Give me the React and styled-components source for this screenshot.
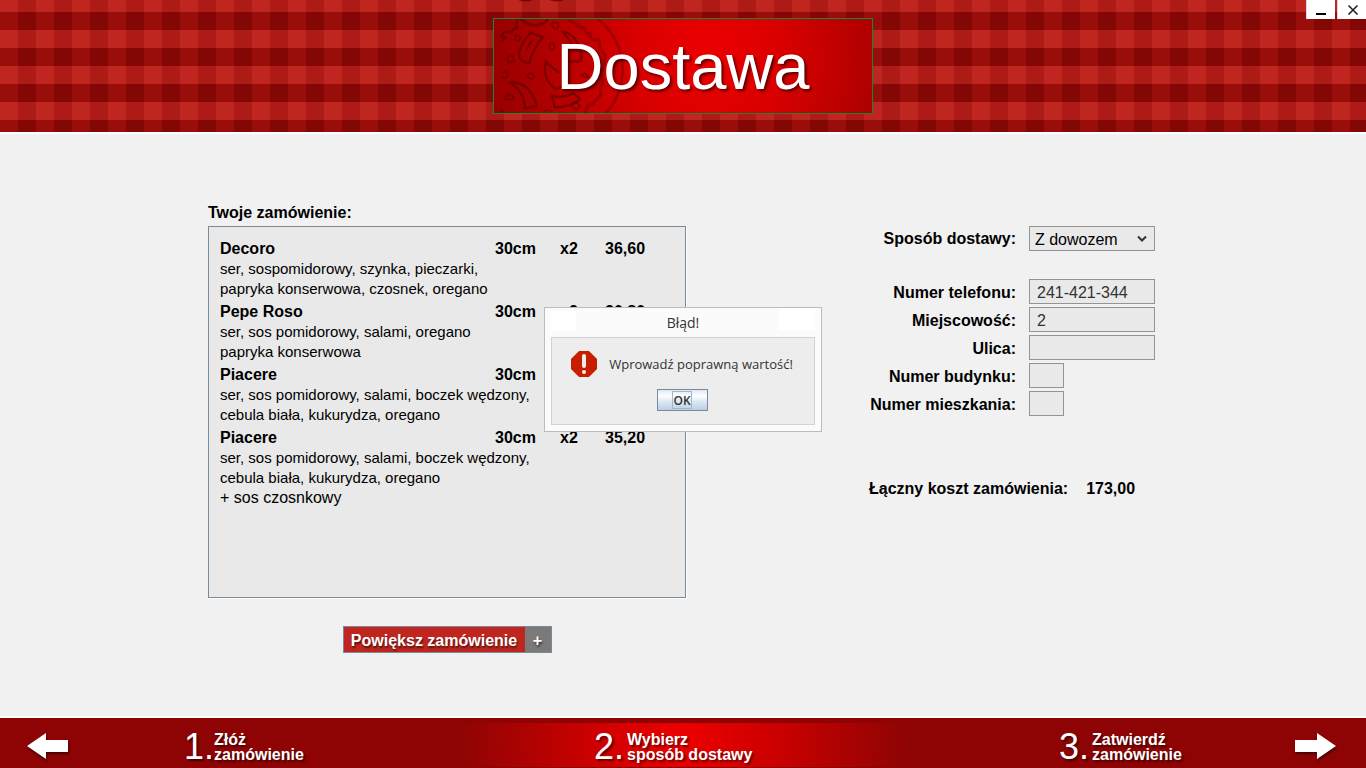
import React from "react";
import styled, { createGlobalStyle } from "styled-components";

const GlobalStyle = createGlobalStyle`
  *, *::before, *::after { box-sizing: border-box; }
  body {
    margin: 0;
    background: #f1f1f1;
    color: #000;
    font-family: "Liberation Sans", Arial, sans-serif;
    font-size: 16px;
  }
  button, input, select { font: inherit; color: inherit; margin: 0; }
`;

const Page = styled.div`
  display: flex;
  flex-direction: column;
  min-height: 100vh;
  position: relative;
`;

const Header = styled.header`
  position: relative;
  display: flex;
  justify-content: center;
  padding: 18px 0;
  background: conic-gradient(#ae1a16 0 25%, #830805 0 50%, #990d0a 0 75%, #c02620 0) 0 -6px / 36px 36px;
`;

const TitlePlate = styled.div`
  position: relative;
  display: flex;
  align-items: center;
  justify-content: center;
  width: 380px;
  height: 96px;
  border: 1px solid #0f8a3c;
  background: radial-gradient(circle 220px at 57% 42%, #ee0000 0%, #d80000 35%, #b20000 72%, #980000 100%);
`;

const Title = styled.h1`
  position: relative;
  margin: 0;
  color: #fff;
  font-size: 65px;
  font-weight: 400;
  line-height: 94px;
  padding-top: 2px;
  text-shadow: 2px 2px 3px rgba(0, 0, 0, 0.6);
`;

const PizzaArt = styled.svg`
  position: absolute;
  top: 0;
  left: 0;
  width: 146px;
  height: 94px;
`;

const PizzaEdge = styled.svg`
  position: absolute;
  top: -19px;
  left: 22px;
  width: 50px;
  height: 3px;
`;

const WindowControls = styled.div`
  position: absolute;
  top: 0;
  right: 0;
  display: flex;
  gap: 2px;
`;

const WindowButton = styled.button`
  display: block;
  width: 29px;
  height: 19px;
  padding: 0;
  border: 0;
  border-left: 1px solid #d4d8ea;
  background: #fff;

  svg { display: block; }
`;

const Main = styled.main`
  flex: 1;
  display: flex;
  justify-content: center;
  align-items: flex-start;
  gap: 182px;
  padding: 68px 24px 63px;
  border-top: 2px solid #fff;
  border-bottom: 2px solid #fff;
`;

const OrderSection = styled.section`
  display: flex;
  flex-direction: column;
  width: 478px;
`;

const SectionTitle = styled.h2`
  margin: 0 0 2px;
  font-size: 16px;
  line-height: 22px;
`;

const OrderList = styled.div`
  min-height: 372px;
  padding: 10px 11px;
  border: 1px solid #7a8a99;
  box-shadow: 1px 1px 0 #fff;
  background: #e9e9e9;
`;

const OrderTable = styled.table`
  width: 100%;
  table-layout: fixed;
  border-collapse: collapse;
  text-align: left;
`;

const NameColumn = styled.col`
  width: 275px;
`;

const SizeColumn = styled.col`
  width: 65px;
`;

const CountColumn = styled.col`
  width: 45px;
`;

const Cell = styled.th`
  padding: 2px 0 0;
  font-weight: 700;
  line-height: 20px;
`;

const Ingredients = styled.td`
  padding: 0 0 1px;
  font-size: 15px;
  line-height: 20px;
`;

const Line = styled.div`
  font-size: ${(p) => (p.$extra ? "16px" : "inherit")};
`;

const EnlargeButton = styled.button`
  display: flex;
  align-self: center;
  height: 27px;
  margin-top: 28px;
  padding: 0;
  border: 1px solid #7a8a99;
  background: #c02620;
  color: #fff;
  font-weight: 700;
  line-height: 24px;
  text-shadow: 1px 2px 2px rgba(0, 0, 0, 0.55);
`;

const EnlargeText = styled.span`
  width: 181px;
  height: 25px;
  padding-top: 2px;
  text-align: center;
`;

const Plus = styled.span`
  width: 26px;
  height: 25px;
  padding-top: 2px;
  background: #7a7a7a;
  text-align: center;
`;

const DeliveryForm = styled.form`
  display: flex;
  flex-direction: column;
  gap: 3px;
  width: 290px;
  padding: 24px 3px 0 0;
`;

const FieldRow = styled.div`
  display: grid;
  grid-template-columns: 1fr 126px;
  column-gap: 13px;
  align-items: center;
  margin-bottom: ${(p) => (p.$spaced ? "25px" : "0")};
`;

const Label = styled.label`
  padding-top: ${(p) => (p.$raised ? "0" : "2px")};
  font-weight: 700;
  line-height: 20px;
  text-align: right;
  white-space: nowrap;
`;

const TextInput = styled.input`
  width: ${(p) => (p.$short ? "35px" : "100%")};
  height: 25px;
  padding: 2px 7px 0;
  border: 1px solid #949494;
  border-radius: 0;
  background: #e9e9e9;
  color: #333;
  outline: none;
`;

const SelectWrap = styled.div`
  position: relative;

  svg {
    position: absolute;
    right: 7px;
    top: 9px;
    pointer-events: none;
  }
`;

const Select = styled.select`
  display: block;
  appearance: none;
  width: 100%;
  height: 25px;
  padding: 2px 5px 0;
  border: 1px solid #949494;
  border-radius: 0;
  background: #e9e9e9;
`;

const Total = styled.p`
  display: flex;
  gap: 18px;
  margin: 60px 0 0 1px;
  font-weight: 700;
  line-height: 20px;
  white-space: nowrap;
`;

const Footer = styled.footer`
  display: grid;
  grid-template-columns: 184fr 410fr 465fr 236fr 71fr;
  align-items: center;
  height: 50px;
  padding-top: 8px;
  background:
    radial-gradient(ellipse 225px 200px at 50% 30%, #ee0000 0%, #c80000 45%, #8e0404 100%)
    center 5px / 448px 44px no-repeat,
    #8e0404;
  color: #fff;
`;

const ArrowButton = styled.button`
  display: block;
  width: 46px;
  height: 34px;
  margin-left: ${(p) => (p.$back ? "26px" : "0")};
  padding: 0;
  border: 0;
  background: none;

  svg {
    display: block;
    filter: drop-shadow(1px 2px 1px rgba(0, 0, 0, 0.5));
  }
`;

const Step = styled.div`
  display: flex;
  align-items: center;
  gap: ${(p) => (p.$tight ? "0" : "3px")};
  white-space: nowrap;
  text-shadow: 2px 2px 2px rgba(0, 0, 0, 0.5);
`;

const StepNumber = styled.span`
  font-size: 36px;
  line-height: 40px;
`;

const StepLabel = styled.span`
  font-weight: 700;
  line-height: 15px;
`;

const Dialog = styled.div`
  position: absolute;
  top: 307px;
  left: 50%;
  width: 278px;
  padding: 0 6px 6px;
  border: 1px solid #bcbcbc;
  background: #fbfbfb;
  color: #333;
  font-family: "Open Sans", "Noto Sans", sans-serif;
  transform: translateX(-50%);
`;

const DialogTitle = styled.h2`
  margin: 0;
  font-size: 14px;
  font-weight: 400;
  line-height: 29px;
  text-align: center;
  background:
    linear-gradient(#fff, #fff) left 3px / 25px 20px no-repeat,
    linear-gradient(#fff, #fff) right top / 36px 22px no-repeat;
`;

const DialogBody = styled.div`
  display: flex;
  flex-direction: column;
  align-items: center;
  gap: 12px;
  padding: 13px 2px 13px 0;
  border: 1px solid #d2d2d2;
  background: #ededed;
`;

const Message = styled.p`
  display: flex;
  align-items: center;
  gap: 12px;
  margin: 0;
  font-size: 13px;
  font-weight: 500;
  line-height: 26px;
  white-space: nowrap;
`;

const OkButton = styled.button`
  display: flex;
  align-items: center;
  justify-content: center;
  width: 51px;
  height: 22px;
  padding: 0;
  border: 1px solid #7a8a99;
  background: linear-gradient(#dde8f3 0%, #ffffff 30%, #e4edf6 50%, #b8cfe5 100%);
  font-size: 12px;
  font-weight: 600;
`;

const FocusBox = styled.span`
  height: 18px;
  border: 1px solid #a3b8cc;
  line-height: 17px;
`;

const orders = [
  { name: "Decoro", size: "30cm", count: "x2", price: "36,60", lines: ["ser, sospomidorowy, szynka, pieczarki,", "papryka konserwowa, czosnek, oregano"] },
  { name: "Pepe Roso", size: "30cm", count: "x2", price: "30,80", lines: ["ser, sos pomidorowy, salami, oregano", "papryka konserwowa"] },
  { name: "Piacere", size: "30cm", count: "", price: "", lines: ["ser, sos pomidorowy, salami, boczek wędzony,", "cebula biała, kukurydza, oregano"] },
  { name: "Piacere", size: "30cm", count: "x2", price: "35,20", lines: ["ser, sos pomidorowy, salami, boczek wędzony,", "cebula biała, kukurydza, oregano"], extra: "+ sos czosnkowy" },
];

const steps = [
  ["1.", "Złóż", "zamówienie"],
  ["2.", "Wybierz", "sposób dostawy"],
  ["3.", "Zatwierdź", "zamówienie"],
];

const fields = [
  { id: "phone", label: "Numer telefonu:", value: "241-421-344" },
  { id: "city", label: "Miejscowość:", value: "2" },
  { id: "street", label: "Ulica:", value: "" },
  { id: "building", label: "Numer budynku:", value: "", short: true },
  { id: "flat", label: "Numer mieszkania:", value: "", short: true },
];

function Pizza() {
  return (
    <>
      <PizzaEdge viewBox="0 0 50 3" aria-hidden="true">
        <g fill="#6c0000" opacity="0.8">
          <path d="M2 0 H17 Q10 3 2 0 Z" />
          <path d="M33 0 H48 Q42 3 33 0 Z" />
        </g>
      </PizzaEdge>
      <PizzaArt viewBox="12 57 438 282" aria-hidden="true">
        <g fill="none" stroke="#6c0000" strokeWidth="7" strokeLinejoin="round" strokeLinecap="round" opacity="0.75">
          <path d="M84 57 Q76 72 82 84 Q66 86 64 98 Q50 92 38 100 L34 108 L48 112 L34 124" />
          <path d="M94 57 Q112 76 136 76 Q160 74 172 60" strokeWidth="8" />
          <path d="M122 98 L158 112 Q128 148 118 190 Q82 184 88 156 Q96 124 122 98 Z" />
          <path d="M110 150 Q116 132 128 120" strokeWidth="5" />
          <path d="M60 246 Q122 246 140 318 L104 326 Q108 282 60 246 Z" />
          <path d="M168 184 Q156 232 190 262 Q204 272 212 260 M168 184 Q184 204 206 216" />
          <path d="M186 286 Q216 298 250 280 L270 296 Q250 320 194 322 Z" />
          <path d="M218 94 Q252 102 264 132 M218 94 L244 128 M240 184 H274 V156" />
          <path d="M34 330 L42 338" />
        </g>
        <g fill="none" stroke="#6c0000" strokeWidth="5" strokeLinejoin="round" opacity="0.65">
          <path d="M76 104 L92 110 L88 122 L76 120 Z" />
          <path d="M52 172 L66 166 L74 184 L54 188 Z" />
          <path d="M34 216 H52 Q54 230 48 234 H32" />
          <path d="M184 72 Q194 62 206 72 Q206 88 194 86 Z" />
          <path d="M178 134 Q190 122 194 140 Q190 156 180 148 Z" />
          <path d="M110 226 L124 218 L134 230 L124 240 Z" />
          <path d="M44 298 L54 280 L72 290 L66 298 Z" />
          <path d="M244 316 L254 304 L272 318 L258 330 Z" />
          <path d="M274 224 L286 220 L296 232 L278 230 Z" />
          <path d="M162 334 Q174 326 186 336" />
        </g>
        <g fill="none" stroke="#780000" strokeLinejoin="round" opacity="0.5">
          <path d="M324 57 Q396 116 398 210 Q394 290 348 339" strokeWidth="8" />
          <path d="M236 62 Q256 66 264 80 L284 84 Q288 108 300 100 L304 118 Q320 122 326 118 L330 144 L346 166 L342 196 L334 222 L338 250 L330 270 L334 284 L318 300 L308 312 L294 316 L284 339" strokeWidth="9" />
        </g>
      </PizzaArt>
    </>
  );
}

function Arrow({ back }) {
  return (
    <svg width="46" height="34" viewBox="0 0 46 34" aria-hidden="true">
      <path
        d={back ? "M1 16 L20 3 V10 H42 V22 H20 V29 Z" : "M41 16 L22 3 V10 H0 V22 H22 V29 Z"}
        fill="#fff"
      />
    </svg>
  );
}

export default function App() {
  return (
    <>
      <GlobalStyle />
      <Page>
        <Header>
          <TitlePlate>
            <Pizza />
            <Title>Dostawa</Title>
          </TitlePlate>
          <WindowControls>
            <WindowButton type="button" aria-label="Minimalizuj">
              <svg width="28" height="19" viewBox="0 0 28 19"><path d="M9 14 H19" stroke="#000" strokeWidth="2" /></svg>
            </WindowButton>
            <WindowButton type="button" aria-label="Zamknij">
              <svg width="28" height="19" viewBox="0 0 28 19"><path d="M10.500 5.500 L19.500 14.500 M19.500 5.500 L10.500 14.500" stroke="#222" strokeWidth="1.600" /></svg>
            </WindowButton>
          </WindowControls>
        </Header>

        <Main>
          <OrderSection>
            <SectionTitle>Twoje zamówienie:</SectionTitle>
            <OrderList>
              <OrderTable>
                <colgroup>
                  <NameColumn />
                  <SizeColumn />
                  <CountColumn />
                  <col />
                </colgroup>
                {orders.map((o, i) => (
                  <tbody key={i}>
                    <tr>
                      <Cell scope="row">{o.name}</Cell>
                      <Cell as="td">{o.size}</Cell>
                      <Cell as="td">{o.count}</Cell>
                      <Cell as="td">{o.price}</Cell>
                    </tr>
                    <tr>
                      <Ingredients colSpan={4}>
                        {o.lines.map((l) => <Line key={l}>{l}</Line>)}
                        {o.extra && <Line $extra>{o.extra}</Line>}
                      </Ingredients>
                    </tr>
                  </tbody>
                ))}
              </OrderTable>
            </OrderList>
            <EnlargeButton type="button">
              <EnlargeText>Powiększ zamówienie</EnlargeText>
              <Plus>+</Plus>
            </EnlargeButton>
          </OrderSection>

          <DeliveryForm onSubmit={(e) => e.preventDefault()}>
            <FieldRow $spaced>
              <Label htmlFor="delivery" $raised>Sposób dostawy:</Label>
              <SelectWrap>
                <Select id="delivery" defaultValue="courier">
                  <option value="courier">Z dowozem</option>
                </Select>
                <svg width="12" height="8" viewBox="0 0 12 8" aria-hidden="true">
                  <path d="M2 1.500 L6 5.500 L10 1.500" fill="none" stroke="#333" strokeWidth="2" />
                </svg>
              </SelectWrap>
            </FieldRow>
            {fields.map((f) => (
              <FieldRow key={f.id}>
                <Label htmlFor={f.id}>{f.label}</Label>
                <TextInput id={f.id} type="text" defaultValue={f.value} $short={f.short} />
              </FieldRow>
            ))}
            <Total>
              <span>Łączny koszt zamówienia:</span>
              <span>173,00</span>
            </Total>
          </DeliveryForm>
        </Main>

        <Footer>
          <ArrowButton type="button" $back aria-label="Wstecz"><Arrow back /></ArrowButton>
          {steps.map(([number, top, bottom], i) => (
            <Step key={number} $tight={i === 0}>
              <StepNumber>{number}</StepNumber>
              <StepLabel>{top}<br />{bottom}</StepLabel>
            </Step>
          ))}
          <ArrowButton type="button" aria-label="Dalej"><Arrow /></ArrowButton>
        </Footer>

        <Dialog role="alertdialog" aria-labelledby="error-title" aria-describedby="error-text">
          <DialogTitle id="error-title">Błąd!</DialogTitle>
          <DialogBody>
            <Message id="error-text">
              <svg width="26" height="26" viewBox="0 0 26 26" aria-hidden="true">
                <path d="M8 0 H18 L26 8 V18 L18 26 H8 L0 18 V8 Z" fill="#c81e00" />
                <path d="M13 5 V15" stroke="#ededed" strokeWidth="4" strokeLinecap="round" />
                <circle cx="13" cy="21" r="2" fill="#ededed" />
              </svg>
              Wprowadź poprawną wartość!
            </Message>
            <OkButton type="button"><FocusBox>OK</FocusBox></OkButton>
          </DialogBody>
        </Dialog>
      </Page>
    </>
  );
}
